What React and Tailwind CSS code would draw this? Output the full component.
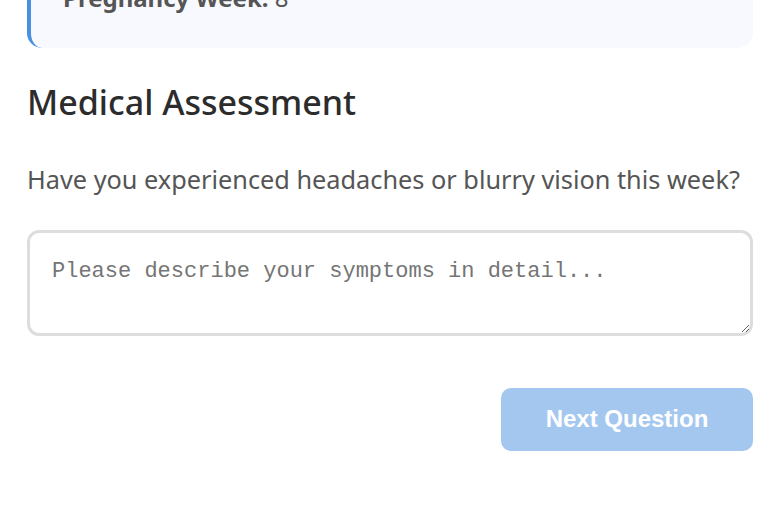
import React, { useState } from 'react';

function App() {
  const [answer, setAnswer] = useState('');

  return (
    <div className="min-h-[505px] overflow-hidden bg-white pl-[27px] pr-[16px] font-['Noto_Sans',sans-serif]">
      <section className="mt-[-52px] rounded-[15px] border-l-4 border-[#4a90e2] bg-[#f8f9fe] pl-[32px] pt-[32px] pb-[32px]">
        <p className="text-[24px] leading-[36px] text-[#555]">
          <span className="font-bold">Pregnancy Week:</span> 8
        </p>
      </section>

      <h2 className="mt-[34px] text-[34px] leading-[1.2] font-medium text-[#2c2c2c]">
        Medical Assessment
      </h2>

      <p className="mt-[38px] text-[25.3px] leading-[36px] text-[#555]">
        Have you experienced headaches or blurry vision this week?
      </p>

      <textarea
        value={answer}
        onChange={(e) => setAnswer(e.target.value)}
        placeholder="Please describe your symptoms in detail..."
        className="mt-[33px] block h-[106px] w-full rounded-[12px] border-[3px] border-[#dddddd] bg-white px-[22px] pt-[26px] pb-[20px] font-['Liberation_Mono',monospace] text-[22px] leading-[1.15] text-[#333] outline-none placeholder:text-[#757575]"
      />

      <div className="mt-[52px] flex justify-end">
        <button
          type="button"
          disabled={!answer}
          className="flex h-[63px] w-[252px] items-center justify-center rounded-[10px] bg-[#a4c7f0] font-['Liberation_Sans',Arial,sans-serif] text-[24px] font-bold text-white"
        >
          Next Question
        </button>
      </div>
    </div>
  );
}

export default App;
